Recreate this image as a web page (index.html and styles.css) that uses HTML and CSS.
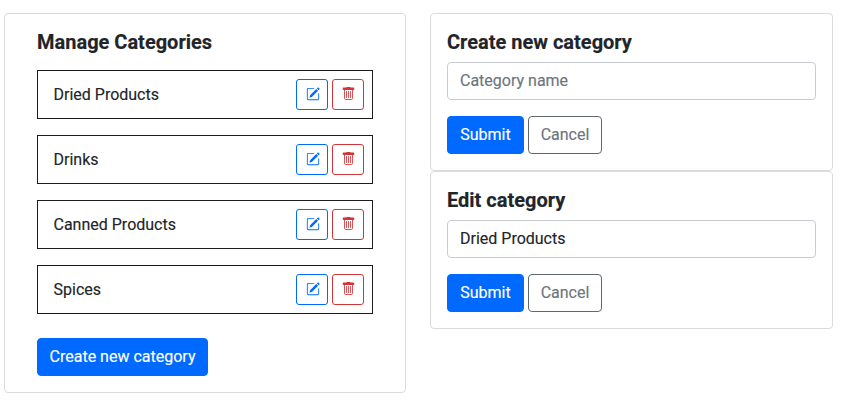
FILE: index.html
```html
<!DOCTYPE html>
<html lang="en">
<head>
<meta charset="utf-8">
<title>Manage Categories</title>
<link rel="stylesheet" href="styles.css">
</head>
<body>
<svg width="0" height="0" class="defs">
<symbol id="edit" viewBox="0 0 16 16"><path d="M15.502 1.94a.5.5 0 0 1 0 .706L14.459 3.69l-2-2L13.502.646a.5.5 0 0 1 .707 0l1.293 1.293zm-1.75 2.456-2-2L4.939 9.21a.5.5 0 0 0-.121.196l-.805 2.414a.25.25 0 0 0 .316.316l2.414-.805a.5.5 0 0 0 .196-.12l6.813-6.814z"/><path fill-rule="evenodd" d="M1 13.5A1.5 1.5 0 0 0 2.5 15h11a1.5 1.5 0 0 0 1.5-1.5v-6a.5.5 0 0 0-1 0v6a.5.5 0 0 1-.5.5h-11a.5.5 0 0 1-.5-.5v-11a.5.5 0 0 1 .5-.5H9a.5.5 0 0 0 0-1H2.5A1.5 1.5 0 0 0 1 2.5v11z"/></symbol>
<symbol id="trash" viewBox="0 0 14 14"><path d="M6 0h3c.4 0 .7.200.7.600h2.900c.4 0 .7.300.7.700v.9c0 .4-.3.700-.7.700H2.400c-.4 0-.7-.3-.7-.7v-.9c0-.4.3-.7.7-.7h2.900c0-.4.3-.6.700-.6z"/><path class="line" d="M3.500 2.500v8.800c0 .7.500 1.200 1.200 1.200h5.600c.7 0 1.200-.5 1.200-1.200V2.500M5.500 4.500v6M7.500 4.500v6M9.500 4.500v6"/></symbol>
</svg>
<main class="layout">
<section class="card manage">
<h2>Manage Categories</h2>
<ul class="list">
<li><span>Dried Products</span><button class="icon edit" aria-label="Edit"><svg><use href="#edit"/></svg></button><button class="icon trash" aria-label="Delete"><svg><use href="#trash"/></svg></button></li>
<li><span>Drinks</span><button class="icon edit" aria-label="Edit"><svg><use href="#edit"/></svg></button><button class="icon trash" aria-label="Delete"><svg><use href="#trash"/></svg></button></li>
<li><span>Canned Products</span><button class="icon edit" aria-label="Edit"><svg><use href="#edit"/></svg></button><button class="icon trash" aria-label="Delete"><svg><use href="#trash"/></svg></button></li>
<li><span>Spices</span><button class="icon edit" aria-label="Edit"><svg><use href="#edit"/></svg></button><button class="icon trash" aria-label="Delete"><svg><use href="#trash"/></svg></button></li>
</ul>
<button class="btn primary create">Create new category</button>
</section>
<div class="forms">
<section class="card form">
<h2>Create new category</h2>
<input type="text" placeholder="Category name">
<div class="actions"><button class="btn primary submit">Submit</button><button class="btn outline">Cancel</button></div>
</section>
<section class="card form">
<h2>Edit category</h2>
<input type="text" value="Dried Products">
<div class="actions"><button class="btn primary submit">Submit</button><button class="btn outline">Cancel</button></div>
</section>
</div>
</main>
</body>
</html>
```
FILE: styles.css
```css
* { box-sizing: border-box; }
body {
  margin: 0;
  background: #fff;
  color: #212529;
  font: 400 16px/24px Roboto, sans-serif;
  -webkit-text-stroke: 0.15px;
}
.defs { position: absolute; }
.layout {
  display: grid;
  grid-template-columns: 402px 403px;
  gap: 24px;
  align-items: start;
  padding: 13px 0 0 4px;
}
.card {
  border: 1px solid #dbdbdb;
  border-radius: 4px;
  padding: 16px;
}
.manage { height: 380px; padding: 16px 32px; }
.form { height: 158px; }
h2 { margin: 0 0 8px; font-size: 20px; line-height: 24px; font-weight: 700; }
.list { list-style: none; margin: 0 0 24px; padding: 0; display: grid; gap: 16px; }
.manage h2 { margin-bottom: 16px; }
.list li {
  display: flex;
  align-items: center;
  gap: 4px;
  height: 49px;
  padding: 0 8px 0 15.5px;
  border: 1px solid #1a1d20;
}
.list span { flex: 1; }
button, input { font: inherit; }
.icon {
  display: flex;
  align-items: flex-start;
  justify-content: center;
  width: 32px;
  height: 31px;
  padding: 7px 0 0;
  border: 1px solid currentColor;
  border-radius: 3px;
  background: #fff;
}
.icon svg { width: 14px; height: 14px; fill: currentColor; }
.icon.edit svg { margin-left: 1px; }
.line { fill: none; stroke: currentColor; stroke-width: 0.85; stroke-linecap: round; }
.edit { color: #0069ff; }
.trash { color: #d13539; }
.btn {
  height: 38px;
  padding: 6px 0;
  width: 74px;
  border: 1px solid #5f6871;
  border-radius: 4px;
}
.primary { background: #0069ff; border-color: #0069ff; color: #fff; }
.create { width: 171px; }
.submit { width: 77px; }
.outline { background: #fff; color: #6c757d; }
.actions { display: flex; gap: 4px; }
input {
  display: block;
  width: 100%;
  height: 38px;
  margin-bottom: 16px;
  padding: 5px 12px 7px;
  border: 1px solid #c9cdd3;
  border-radius: 4px;
  color: #212529;
  background: #fff;
}
input::placeholder { color: #6c757d; opacity: 1; }
```
